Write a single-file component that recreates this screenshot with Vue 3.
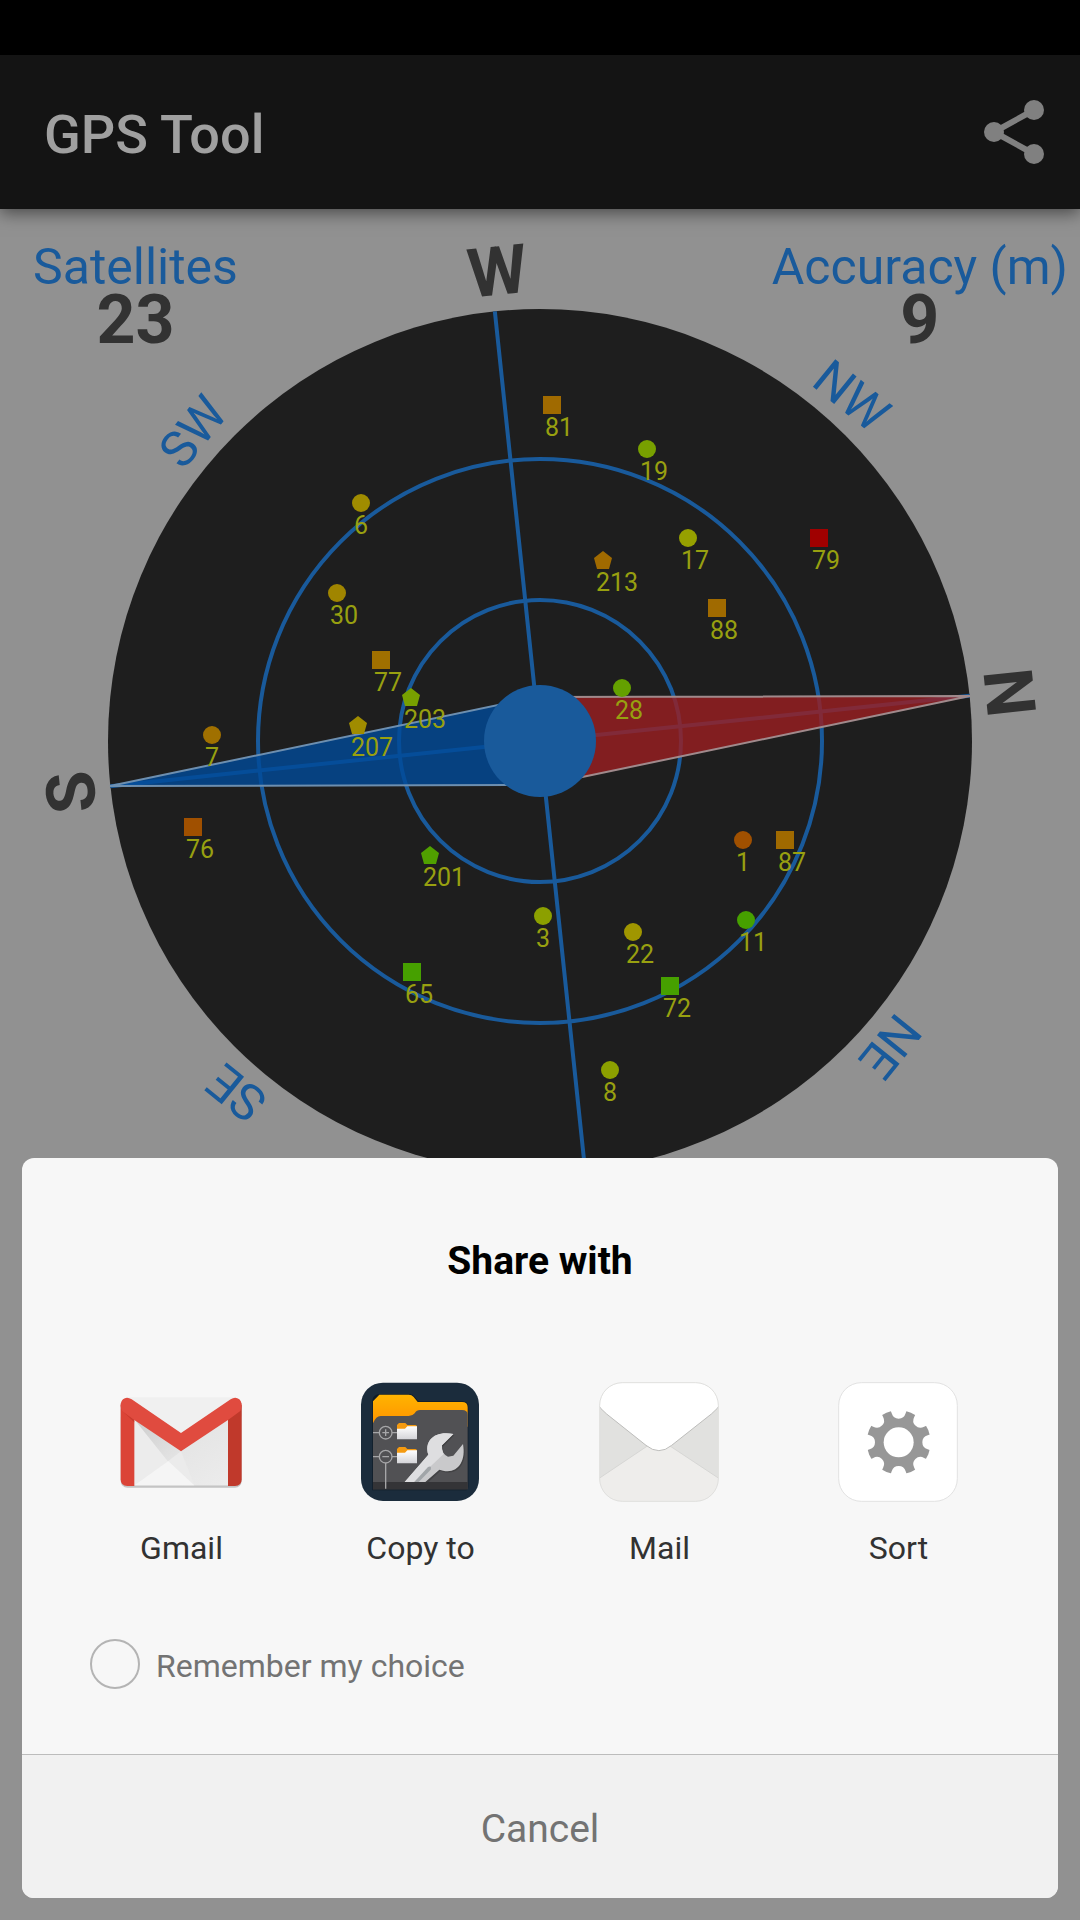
<script setup>
import { ref } from 'vue'

const remember = ref(false)

const satellites = [
  { id: 81, shape: 'square', x: 552, y: 405, color: '#a06a00' },
  { id: 19, shape: 'circle', x: 647, y: 449, color: '#78a000' },
  { id: 6, shape: 'circle', x: 361, y: 503, color: '#a08c00' },
  { id: 17, shape: 'circle', x: 688, y: 538, color: '#96a000' },
  { id: 79, shape: 'square', x: 819, y: 538, color: '#a00000' },
  { id: 213, shape: 'pentagon', x: 603, y: 560, color: '#a06a00' },
  { id: 88, shape: 'square', x: 717, y: 608, color: '#a06a00' },
  { id: 30, shape: 'circle', x: 337, y: 593, color: '#a08500' },
  { id: 77, shape: 'square', x: 381, y: 660, color: '#a07000' },
  { id: 203, shape: 'pentagon', x: 411, y: 697, color: '#78a000' },
  { id: 207, shape: 'pentagon', x: 358, y: 725, color: '#a08c00' },
  { id: 7, shape: 'circle', x: 212, y: 735, color: '#a07000' },
  { id: 28, shape: 'circle', x: 622, y: 688, color: '#64a000' },
  { id: 76, shape: 'square', x: 193, y: 827, color: '#a05000' },
  { id: 201, shape: 'pentagon', x: 430, y: 855, color: '#50a000' },
  { id: 3, shape: 'circle', x: 543, y: 916, color: '#8ca000' },
  { id: 65, shape: 'square', x: 412, y: 972, color: '#46a000' },
  { id: 1, shape: 'circle', x: 743, y: 840, color: '#a05000' },
  { id: 87, shape: 'square', x: 785, y: 840, color: '#a06a00' },
  { id: 11, shape: 'circle', x: 746, y: 920, color: '#46a000' },
  { id: 22, shape: 'circle', x: 633, y: 932, color: '#a09600' },
  { id: 72, shape: 'square', x: 670, y: 986, color: '#46a000' },
  { id: 8, shape: 'circle', x: 610, y: 1070, color: '#8ca000' },
]

// Bearing of each label on the dial, before the heading is applied.
const heading = -6
const cardinals = [
  { name: 'W', angle: 0 },
  { name: 'N', angle: 90 },
  { name: 'S', angle: 270 },
]
const diagonals = [
  { name: 'NW', angle: 45 },
  { name: 'NE', angle: 135 },
  { name: 'SE', angle: 225 },
  { name: 'SW', angle: 315 },
]
const notches = [0, 45, 90, 135, 180, 225, 270, 315]
</script>

<template>
  <div class="page">
    <div class="status"></div>
    <header class="bar">
      <h1>GPS Tool</h1>
      <button class="share" type="button" aria-label="Share">
        <svg viewBox="0 0 64 68" width="64" height="68">
          <path d="M52 12 12 34 52 56" fill="none" stroke="#808080" stroke-width="6" />
          <g fill="#808080">
            <circle cx="52" cy="12" r="10" /><circle cx="12" cy="34" r="10" /><circle cx="52" cy="56" r="10" />
          </g>
        </svg>
      </button>
    </header>

    <main class="radar">
      <svg class="dial" viewBox="0 209 1080 1030">
        <circle cx="540" cy="741" r="432" fill="#1e1e1e" />
        <g fill="none" stroke="#195a9b" stroke-width="4">
          <circle cx="540" cy="741" r="282" />
          <circle cx="540" cy="741" r="141" />
          <g :transform="`rotate(${heading} 540 741)`">
            <path d="M540 309V1173M108 741H972" />
          </g>
        </g>
        <g stroke-width="2" stroke-linejoin="bevel">
          <path d="M536 697 970 696 544 785Z" fill="#9b1e20" fill-opacity=".8" stroke="#a08a8c" />
          <path d="M536 697 110 786 544 785Z" fill="#004a98" fill-opacity=".8" stroke="#6d8fb0" />
        </g>
        <circle cx="540" cy="741" r="56" fill="#195a9b" />

        <g v-for="s in satellites" :key="s.id" :transform="`translate(${s.x} ${s.y})`">
          <rect v-if="s.shape === 'square'" x="-9" y="-9" width="18" height="18" :fill="s.color" />
          <circle v-else-if="s.shape === 'circle'" r="9" :fill="s.color" />
          <path v-else d="M0-9 9-2 6 9H-6L-9-2Z" :fill="s.color" />
          <text class="sat" x="-7" y="31">{{ s.id }}</text>
        </g>

        <text
          v-for="c in cardinals" :key="c.name" class="cardinal" x="517" y="293"
          :transform="`rotate(${c.angle + heading} 540 741)`"
        >{{ c.name }}</text>
        <text
          v-for="d in diagonals" :key="d.name" class="diagonal" x="525" y="294"
          :transform="`rotate(${d.angle + heading} 540 741)`"
        >{{ d.name }}</text>
      </svg>

      <div class="stats">
        <div class="stat"><span class="name">Satellites</span><strong>23</strong></div>
        <div class="stat"><span class="name">Accuracy (m)</span><strong>9</strong></div>
      </div>
    </main>

    <section class="sheet" role="dialog" aria-labelledby="sheet-title">
      <h2 id="sheet-title">Share with</h2>
      <div class="apps">
        <button class="app" type="button">
          <svg viewBox="66 66 360 360">
            <defs>
              <linearGradient id="gm-body" x1="0" y1="0" x2="1" y2="1">
                <stop offset="0" stop-color="#cdcdcd" /><stop offset="1" stop-color="#e6e6e6" />
              </linearGradient>
              <linearGradient id="gm-right" x1="0" y1="0" x2="1" y2="1">
                <stop offset="0" stop-color="#dfdfdf" /><stop offset="1" stop-color="#ececec" />
              </linearGradient>
            </defs>
            <rect x="62" y="116" width="363" height="267" rx="20" fill="#c4c4c4" />
            <path d="M80 112H406V376H80Z" fill="#f0f0f0" />
            <path d="M103 178 243 274 384 178V376H103Z" fill="url(#gm-right)" />
            <path d="M103 178 205 305 103 376Z" fill="#ececec" />
            <path d="M103 178 243 274 205 305Z" fill="url(#gm-body)" />
            <path d="M205 303 243 274 283 376Z" fill="#ebebeb" />
            <path d="M103 376 205 303 283 376Z" fill="#f5f5f5" />
            <path d="M62 134V358Q62 378 82 378H103V170Z" fill="#db4437" />
            <path d="M425 134V358Q425 378 405 378H384V170Z" fill="#c0392b" />
            <path d="M62 148 103 187V174Z" fill="#b93226" opacity=".6" />
            <path d="M66 153Q56 130 69 118 80 109 95 118L243 219 392 118Q406 109 418 118 431 130 421 153L384 180 243 274 103 180Z" fill="#e04b3f" />
          </svg>
          <span>Gmail</span>
        </button>

        <button class="app" type="button">
          <svg viewBox="783 66 360 360">
            <defs>
              <linearGradient id="cp-orange" x1="0" y1="0" x2="0" y2="1">
                <stop offset="0" stop-color="#ffb400" /><stop offset="1" stop-color="#ff9000" />
              </linearGradient>
              <linearGradient id="cp-paper" x1="0" y1="0" x2="0" y2="1">
                <stop offset="0" stop-color="#fff" /><stop offset="1" stop-color="#d4d4d8" />
              </linearGradient>
            </defs>
            <rect x="783" y="68" width="354" height="355" rx="66" fill="#1b2c3c" />
            <path d="M817 120Q820 103 840 103H928Q938 103 944 110L955 124H1088Q1105 124 1105 142V380Q1105 391 1094 391H817Z" fill="#101c27" />
            <path d="M819 190V124L838 104H926Q935 104 941 111L953 126H1086Q1103 126 1103 142V200H819Z" fill="url(#cp-orange)" />
            <path d="M819 190Q828 168 842 168H926Q938 168 944 160 950 150 960 150H1086Q1103 150 1103 164V388H819Z" fill="#515154" />
            <rect x="819" y="366" width="284" height="22" fill="#343437" />
            <g fill="none" stroke="#a6a6a8" stroke-width="4">
              <circle cx="857" cy="218" r="19" /><circle cx="857" cy="290" r="19" />
              <path d="M819 218H838M876 218H892M819 290H838M876 290H892M857 309V386M847 218H867M857 208V228M847 290H867" />
            </g>
            <g v-for="y in [0, 72]" :key="y" :transform="`translate(0 ${y})`">
              <path d="M891 208V195L897 189H916L922 195H946Q951 195 951 201V212H891Z" fill="#f49a10" />
              <path d="M891 206H915L922 199H951V238H891Z" fill="url(#cp-paper)" />
            </g>
            <path d="M914 368 985 284C972 243 1003 211 1060 222L1026 256Q1025 283 1044 290L1060 287 1089 252C1099 305 1072 342 1029 332L1018 329 976 368Z" fill="#39393b" transform="translate(3 4)" opacity=".6" />
            <path d="M914 366 985 284C972 243 1003 211 1060 222L1026 256Q1025 283 1044 290L1060 287 1089 252C1099 305 1072 342 1029 332L1018 329 976 366Z" fill="#c9c9cb" />
            <path d="M914 366 985 284C972 243 1003 211 1060 222L1026 256Q1024 272 1031 282L942 366Z" fill="#dedee0" />
            <path d="M943 366 984 321Q996 316 992 329L956 366Z" fill="#a1a5a8" />
          </svg>
          <span>Copy to</span>
        </button>

        <button class="app" type="button">
          <svg viewBox="60 66 360 360">
            <defs>
              <clipPath id="ml-clip"><rect x="59" y="68" width="356" height="356" rx="68" /></clipPath>
            </defs>
            <g clip-path="url(#ml-clip)">
              <rect x="57" y="66" width="360" height="360" fill="#e1e1df" />
              <path d="M50 360 202 258H270L424 360V430H50Z" fill="#eeedeb" stroke="#d6d6d4" stroke-width="3" />
              <path d="M50 60V128Q60 146 80 162L198 256Q237 288 275 256L394 162Q414 146 424 128V60Z" fill="#fff" stroke="#bdbdbb" stroke-width="3" />
            </g>
            <rect x="59" y="68" width="356" height="356" rx="68" fill="none" stroke="#e0e0de" stroke-width="3" />
          </svg>
          <span>Mail</span>
        </button>

        <button class="app" type="button">
          <svg viewBox="777 66 360 360">
            <defs>
              <mask id="gear-mask">
                <rect x="774" y="66" width="360" height="360" fill="#fff" />
                <circle cx="956" cy="247" r="45" />
                <g v-for="a in notches" :key="a" :transform="`rotate(${a} 956 247)`">
                  <path d="M928 140H984L977 160Q972 176 956 176T935 160Z" />
                </g>
              </mask>
            </defs>
            <rect x="776" y="68" width="356" height="356" rx="68" fill="#fff" stroke="#e2e2e2" stroke-width="3" />
            <circle cx="956" cy="247" r="96" fill="#979797" mask="url(#gear-mask)" />
          </svg>
          <span>Sort</span>
        </button>
      </div>
      <label class="remember">
        <input v-model="remember" type="checkbox" />
        <span>Remember my choice</span>
      </label>
      <button class="cancel" type="button">Cancel</button>
    </section>
  </div>
</template>

<style>
body {
  background: #919191;
}
</style>

<style scoped>
.page {
  position: relative;
  min-height: 100vh;
  background: #919191;
  font-family: Roboto, "Liberation Sans", sans-serif;
  overflow: hidden;
}
h1,
h2 {
  margin: 0;
}
button {
  font: inherit;
  border: 0;
  padding: 0;
  background: none;
}
.status {
  height: 55px;
  background: #000;
}
.bar {
  position: relative;
  display: flex;
  align-items: center;
  justify-content: space-between;
  height: 154px;
  padding: 0 34px 0 44px;
  background: #141414;
  box-shadow: 0 4px 16px rgba(0, 0, 0, 0.5);
}
h1 {
  padding-top: 6px;
  font-size: 54px;
  font-weight: 500;
  line-height: 64px;
  color: #a0a0a0;
}
.share,
.share svg {
  display: block;
}
.radar {
  display: grid;
}
.dial,
.stats {
  grid-area: 1 / 1;
}
.dial {
  display: block;
  width: 100%;
}
.stats {
  display: flex;
  justify-content: space-between;
  align-items: flex-start;
  padding: 32px 12px 0 33px;
}
.stat {
  display: flex;
  flex-direction: column;
  align-items: center;
  line-height: 52px;
}
.name {
  font-size: 50px;
  color: #195a9b;
}
.stat strong {
  font-size: 68px;
  font-weight: 700;
  line-height: 54px;
  color: #323232;
}
.sat {
  font-size: 25px;
  fill: #98a010;
}
.cardinal {
  font-size: 68px;
  font-weight: 700;
  fill: #323232;
}
.diagonal {
  font-size: 50px;
  fill: #195a9b;
}
.sheet {
  position: absolute;
  left: 22px;
  right: 22px;
  bottom: 22px;
  display: flex;
  flex-direction: column;
  border-radius: 12px;
  background: #f7f7f7;
  overflow: hidden;
}
h2 {
  padding-top: 79px;
  font-size: 39px;
  font-weight: 700;
  line-height: 48px;
  text-align: center;
  color: #000;
}
.apps {
  display: grid;
  grid-template-columns: repeat(4, 1fr);
  padding: 97px 40px 0;
}
.app {
  display: flex;
  flex-direction: column;
  align-items: center;
  gap: 26px;
  font-size: 32px;
  line-height: 40px;
  color: #323232;
}
.app svg {
  width: 120px;
  height: 120px;
  overflow: visible;
}
.remember {
  display: flex;
  align-items: center;
  gap: 16px;
  margin: 71px 68px 65px;
  font-size: 32px;
  line-height: 40px;
  color: #737373;
}
.remember span {
  padding-top: 4px;
}
.remember input {
  appearance: none;
  width: 50px;
  height: 50px;
  margin: 0;
  border: 2px solid #b4b4b4;
  border-radius: 50%;
}
.remember input:checked {
  background: #195a9b;
}
.cancel {
  height: 144px;
  padding-top: 4px;
  border-top: 1px solid #bcbcbc;
  background: #f1f1f1;
  font-size: 39px;
  color: #737373;
}
</style>
